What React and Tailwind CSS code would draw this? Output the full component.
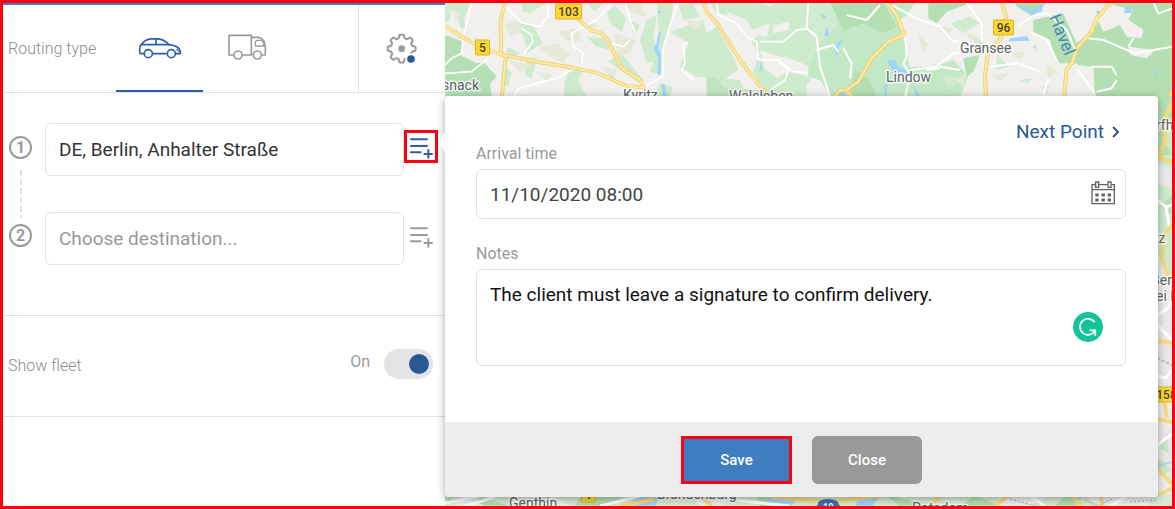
import React, { useState } from 'react';

function CarIcon() {
  return (
    <svg viewBox="414 110 132 66" className="w-11 h-[22px]" fill="none" stroke="#2f5ea8" strokeWidth="5" strokeLinejoin="round">
      <path d="M432 160H424Q419 160 419 154V146Q419 138 424 133Q434 117 454 115.500H474Q491 116 507 133Q531 136 538 146Q541 150 541 160H527M500 160H459" />
      <path d="M422 133H508M468 116V133" />
      <path d="M538 145Q529 145 530 149Q532 153 541 153" strokeWidth="3" />
      <circle cx="445" cy="160" r="12" />
      <circle cx="514" cy="160" r="12" />
    </svg>
  );
}

function TruckIcon() {
  return (
    <svg viewBox="21 103 120 81" className="w-10 h-[27px]" fill="none" stroke="#9b9b9b" strokeWidth="5" strokeLinejoin="round">
      <path d="M41 166H27V107H94V166H68M98 166H94M94 113H116Q133 116 136 139V166H126" />
      <path d="M135 139H106V129Q106 122 113 122H125Q131 129 133 139" strokeWidth="4" />
      <circle cx="54" cy="166" r="12" />
      <circle cx="112" cy="166" r="12" />
    </svg>
  );
}

const gearPath = Array.from({ length: 8 }, (_, i) => {
  const at = (deg, r) => {
    const a = ((i * 45 + deg) * Math.PI) / 180;
    return `${(Math.cos(a) * r).toFixed(1)} ${(Math.sin(a) * r).toFixed(1)}`;
  };
  return `${i ? 'L' : 'M'}${at(-12, 35)}Q${at(-11, 42)} ${at(-6, 42)}L${at(6, 42)}Q${at(11, 42)} ${at(12, 35)}Q${at(22, 29)} ${at(33, 35)}`;
}).join('') + 'Z';

function GearIcon() {
  return (
    <svg viewBox="-47 -47 96 96" className="w-8 h-8">
      <path d={gearPath} fill="none" stroke="#9b9b9b" strokeWidth="6" strokeLinejoin="round" />
      <circle r="10" fill="#9b9b9b" />
      <circle cx="28" cy="31" r="17" fill="#fff" />
      <circle cx="28" cy="31" r="11.500" fill="#2b5797" />
    </svg>
  );
}

function ListPlusIcon() {
  return (
    <svg viewBox="147 84 75 66" className="w-[25px] h-[22px] shrink-0" fill="none" stroke="currentColor" strokeWidth="6" strokeLinecap="round">
      <path d="M153 88H201M153 108H201M153 127H182M193 132H216M205 120V143" />
    </svg>
  );
}

function CalendarIcon() {
  return (
    <svg viewBox="332 272 72 72" className="w-6 h-6" fill="none" stroke="#636363" strokeWidth="4">
      <path d="M344 283H335V340H402V283H393M356 283H382M335 298H402" />
      <path d="M346 275H355V291H346ZM383 275H392V291H383Z" />
      <path d="M345 314H392M345 329H392" strokeWidth="9" strokeDasharray="10 8.500" />
    </svg>
  );
}

function GrammarIcon() {
  return (
    <svg viewBox="279 66 90 90" className="w-[30px] h-[30px]">
      <circle cx="324" cy="111" r="45" fill="#15c39a" />
      <path d="M344 97A24 24 0 1 0 345 122M329 121H346V138" fill="none" stroke="#fff" strokeWidth="5" />
    </svg>
  );
}

function RoadSign({ x, y, w, label }) {
  return (
    <g>
      <rect x={x} y={y} width={w} height="15" rx="1" fill="#fdd835" stroke="#d9b526" />
      <text x={x + w / 2} y={y + 12} textAnchor="middle" fontSize="12" fontWeight="500" fill="#4a4321">{label}</text>
    </g>
  );
}

const places = [
  { x: 442, y: 90, name: 'snack' },
  { x: 623, y: 100, name: 'Kyritz' },
  { x: 729, y: 101, name: 'Walsleben' },
  { x: 960, y: 53, name: 'Gransee' },
  { x: 886, y: 82, name: 'Lindow' },
  { x: 1156, y: 130, name: 'rfhof' },
  { x: 1154, y: 243, name: 'tz' },
  { x: 1151, y: 285, name: 'Bernau' },
  { x: 1156, y: 301, name: 'ei Berlin' },
  { x: 509, y: 508, name: 'Genthin' },
  { x: 657, y: 499, name: 'Brandenburg' },
  { x: 912, y: 513, name: 'Potsdam' },
];

// major roads, drawn once as a dark casing and once as a lighter fill
const roadsWest =
  'M15 78L90 125 180 163 300 187 400 203 475 220 560 258 615 262M195 8L182 60 183 160 197 170 186 288M405 50L455 92 480 98 500 115 545 205 600 240 612 265M790 8L800 35 835 75 880 150 925 215 985 288';
const roadsEast =
  'M262 8L290 45 312 104 265 125 215 175 175 245 140 270 118 272 105 288M135 270L155 288M605 8L618 50 600 120 565 150 555 230 558 290M930 8L890 55 875 95 830 145 818 185 800 210 792 290M1118 270L1095 330';

function MapView() {
  return (
    <svg
      viewBox="445 3 727 503"
      preserveAspectRatio="xMinYMin slice"
      className="absolute inset-0 w-full h-full"
      fontFamily="Roboto, sans-serif"
      aria-hidden="true"
    >
      <rect x="445" y="3" width="727" height="503" fill="#f2f0ed" />

      {/* north west */}
      <g transform="translate(440 0) scale(.33333)">
        <g fill="#ceebce">
          <path d="M30 8H90L70 60 80 90 60 80 50 40 25 25ZM245 8H320L270 40 250 35ZM225 65L280 80 310 130 260 160 255 120ZM200 140L240 160 200 180ZM185 195L215 215 205 260 185 250ZM260 175L290 170 275 235 255 225ZM395 195L430 210 415 240 440 290H370L375 240ZM440 8H490L465 35ZM500 40L525 15 560 55 545 95 515 75ZM440 110L490 115 510 150 470 140ZM505 185L545 160 610 240 600 250 550 215ZM100 110L125 125 120 150ZM15 8H35L30 60 15 70Z" />
          <path d="M620 60L650 45 640 110 660 180 620 190 600 120ZM650 8H700L690 80 670 130 665 225 630 215 660 140ZM690 95L790 60 800 100 830 80 880 170 895 210 850 240 770 230 720 200 745 130ZM810 8H1110V200L1040 170 960 175 900 50 830 40ZM715 15L760 10 780 50 730 60ZM570 60L600 75 585 110ZM660 250L700 260 690 290H640ZM950 180L1040 175 1110 210V290H990L940 220ZM800 230L900 240 920 290H800Z" />
        </g>
        <g fill="#f2f0ed">
          <path d="M860 35L920 60 950 110 930 130 870 70ZM910 100L990 70 980 110ZM1000 75L1050 65 1045 90 1000 100ZM960 150L1110 200V230L1040 215 1010 235 970 200ZM960 8H1010L990 20Z" />
        </g>
        <g fill="#b5e0b5">
          <path d="M15 105L70 125 60 165 110 190 130 185 170 230 150 250 155 288H15Z" />
          <path d="M800 232L830 235 850 260 990 275V290H800Z" fill="#bfe5bf" />
        </g>
        <g fill="#e5ead7">
          <path d="M195 75L230 60 245 100 210 110ZM300 140L350 130 390 160 370 190 320 165ZM355 95L415 85 425 125 380 120ZM290 215L340 225 320 240ZM525 100L590 120 570 160 530 170ZM445 60L480 80 450 90ZM205 180L280 195 240 220ZM555 15L600 8 620 50 580 40ZM730 60L790 65 770 90ZM485 200L530 210 520 245ZM40 25L60 40 45 70Z" />
        </g>
        <g fill="#9fd4fb">
          <path d="M656 95L663 97 656 145 663 165 662 225 652 222 655 175 640 145 650 130ZM652 38L660 28 662 40ZM665 250L675 255 679 288H668ZM957 210L965 185 967 215Z" />
        </g>
        <g fill="none" stroke="#fff" strokeWidth="5" strokeLinejoin="round">
          <path d="M95 8L85 50 70 110 65 160 35 175 15 195M15 220L95 215 140 178M195 18L245 68 300 80 325 50V8M245 85L275 105 278 125 250 165M515 8L470 60 430 80 395 100 400 140 430 160 425 190M225 288L235 265 290 250 350 235 405 205M555 8L570 60 590 105M715 8L695 60 668 150V230L620 255M515 130L550 140 570 120M745 125L730 135 735 190 725 210 760 240M830 8L835 45 890 70 920 110 950 125 955 180 1015 180 1060 215 1110 220M960 125H1030L1070 90 1110 85M1015 185L1045 210 1035 240 990 270" />
        </g>
        <path d={roadsWest} fill="none" stroke="#eccb6c" strokeWidth="11" strokeLinejoin="round" />
        <path d={roadsWest} fill="none" stroke="#fee89c" strokeWidth="7" strokeLinejoin="round" />
      </g>

      {/* north east */}
      <g transform="translate(800 0) scale(.33333)">
        <path d="M25 8H345L300 75 320 105 330 180 410 195 460 180 505 230 480 290H90L60 240 25 230Z" fill="#c3e8c5" />
        <path d="M25 8H120L110 80 60 130 25 200Z" fill="#cfebd0" />
        <path d="M20 250L60 240 90 290H20Z" fill="#f2f0ed" />
        <path d="M90 8H250L290 80 250 100 190 70 130 90ZM165 210L210 240 230 290H150ZM385 8H515L440 35 410 70 385 55ZM700 60L790 40 830 130 870 100 940 8H1118V290H890L860 220 830 190 770 190 750 120 700 95ZM490 175L540 165 520 215 500 230ZM645 8H740L700 50 650 20Z" fill="#b3dfb3" />
        <g fill="#f2f0ed">
          <path d="M890 50L940 15 1000 30 985 60 1030 90 1025 115 980 110 960 75 910 95ZM985 140L1065 150 1040 175 990 165ZM830 195L880 200 885 290H860L850 230ZM300 60L350 25 385 80 400 200 330 200 310 110Z" />
        </g>
        <g fill="#cfebd0">
          <path d="M450 70L510 50 540 70 490 100ZM520 110L560 130 570 160 530 170ZM425 225L480 230 450 270ZM590 165L630 200 590 210ZM660 240L700 235 680 250Z" />
        </g>
        <g fill="#e5ead7">
          <path d="M350 100L385 130 370 155ZM415 80L460 85 440 110ZM570 225L625 220 600 245ZM740 190L775 215 745 235ZM465 240L500 220 490 260ZM630 160L680 155 660 180ZM500 95L530 110 510 125ZM720 260L750 250 740 285Z" />
        </g>
        <g fill="#9fd4fb">
          <path d="M260 182L285 178 295 200 330 215 325 235 285 222ZM105 135L132 115 115 145 108 175ZM72 108L82 78 88 105ZM55 38L78 50 72 54ZM645 10L700 30 730 12 725 35 690 42ZM630 115L680 108 690 122 625 124ZM700 140L708 132 706 150ZM890 30L910 40 890 42ZM975 25L990 20 1000 38 972 40ZM1063 215L1074 222 1070 235ZM253 255L262 250 260 290 252 280ZM340 255L360 290H348ZM118 283L130 272 138 288H118Z" />
        </g>
        <g fill="none" stroke="#fff" strokeWidth="6" strokeLinejoin="round">
          <path d="M25 8L20 85 50 110 60 200 90 290M140 45L200 60 240 15M50 150L100 135 115 155M130 145L155 190 150 235M275 15L360 60 420 80 455 120 475 125M315 105L320 170 310 190 330 225 315 290M330 210L410 200 460 160 500 155M500 8L545 70 545 125M570 200L650 190 720 215M655 75L700 48 740 40 800 90 830 160M690 95L740 120 775 190M865 115L910 120 1005 160 1118 140M1000 115L985 140M830 205L885 280M875 200H935L950 225M950 240L935 265 890 275M1060 8L1075 40 1118 25M420 200L480 210M380 210L420 205M730 285L745 235" />
        </g>
        <path d={roadsEast} fill="none" stroke="#e9ca6e" strokeWidth="12" strokeLinejoin="round" />
        <path d={roadsEast} fill="none" stroke="#fee89c" strokeWidth="8" strokeLinejoin="round" />
      </g>

      {/* east edge */}
      <path d="M1157 96H1172V300H1157Z" fill="#cdebcd" />
      <path d="M1157 96H1172V118L1164 140 1172 155H1157ZM1160 206L1172 195V215Z" fill="#b5e0b5" />
      <path d="M1157 162L1172 170V188L1157 184ZM1157 255L1166 262 1172 300V506H1157Z" fill="#e9e9e8" />
      <path d="M1157 395H1172V430L1157 420ZM1157 470L1172 480V506H1157Z" fill="#edeef0" />
      <path d="M1160 448L1167 432 1169 454ZM1157 457L1172 470 1160 476Z" fill="#c5e7c8" />
      <path d="M1157 466L1172 462" stroke="#a9d5f5" strokeWidth="2" />
      <path d="M1157 200L1166 207 1172 205M1166 207L1170 230M1157 316L1168 308 1172 300M1157 325L1172 340M1157 376L1166 378 1172 370M1157 445L1172 434" fill="none" stroke="#fff" strokeWidth="3" />
      <path d="M1157 358L1172 365" stroke="#bbb" strokeWidth="2" strokeDasharray="3 2" />
      <path d="M1172 102L1164 120 1165 140 1159 158 1172 162M1172 225L1164 236 1162 258 1168 275 1172 278M1157 341L1172 343M1164 400L1167 418M1157 419L1172 422M1157 468L1172 484M1157 496L1172 488" fill="none" stroke="#f7da80" strokeWidth="4" />

      {/* south edge */}
      <path d="M445 495H1172V506H445Z" fill="#d9ebd3" />
      <path d="M445 495H455L445 506ZM478 496L510 506H480ZM580 496H625L610 506H575ZM755 495H805L790 506H760ZM885 495L935 506H900ZM975 495L1000 506H960ZM1065 495H1083L1075 506H1055Z" fill="#b5dfb5" />
      <path d="M460 495L485 506H455ZM550 495L572 506H545ZM690 495H740L720 506H700ZM1000 495H1050L1030 506H995ZM1085 495H1150V506H1100Z" fill="#edeef0" />
      <path d="M635 495L660 497 655 506H630ZM770 495L800 497 790 506H765ZM860 495L880 497 872 506H855Z" fill="#9fd4fb" />
      <path d="M445 503L480 496M465 506L495 497M600 506L640 496M735 500L790 506M1030 496L1045 506M1110 506L1125 497" fill="none" stroke="#fff" strokeWidth="3" />
      <path d="M620 506L655 499M700 496L712 506M770 497L830 502 880 496M930 506L940 496M995 506L1008 496M1072 496L1081 506M1100 496L1103 506" fill="none" stroke="#f7da80" strokeWidth="4" />
      <path d="M1010 499L1035 506M1085 500L1097 506 1112 499M1130 502L1157 500" fill="none" stroke="#aaa" strokeDasharray="2 2" />

      {places.map((p) => (
        <text
          key={p.name}
          x={p.x}
          y={p.y}
          fontSize="14"
          fill="#5f6368"
          stroke="#fff"
          strokeWidth="3"
          strokeOpacity="0.8"
          strokeLinejoin="round"
          paintOrder="stroke"
        >
          {p.name}
        </text>
      ))}
      <text transform="translate(1049 17) rotate(68)" fontSize="17" fill="#4a86b8">Havel</text>

      <RoadSign x={555.5} y={4} w={26} label="103" />
      <RoadSign x={475.5} y={40} w={14} label="5" />
      <RoadSign x={993.5} y={20} w={20} label="96" />
      <RoadSign x={1153.5} y={387} w={26} label="158" />
      <RoadSign x={581.5} y={487} w={14} label="1" />
      <path d="M817 506L819 501Q828 497 837 501L840 506Z" fill="#3b6db5" />
      <text x="823" y="510" fontSize="9" fontWeight="700" fill="#fff">10</text>
    </svg>
  );
}

function Sidebar() {
  const [type, setType] = useState('car');
  const [from, setFrom] = useState('DE, Berlin, Anhalter Straße');
  const [to, setTo] = useState('');
  const [fleet, setFleet] = useState(true);

  return (
    <aside className="w-[442px] shrink-0 bg-white border-t-2 border-[#3f7dc1]">
      <div className="flex h-[88px] border-b border-[#e0e0e0]">
        <span className="w-[113px] pl-[5px] leading-[88px] font-light text-[#8c8c8c]">Routing type</span>
        <button
          aria-label="Car"
          onClick={() => setType('car')}
          className={`w-[87px] flex items-center justify-center border-b-2 ${type === 'car' ? 'border-[#2f5ea8]' : 'border-transparent'}`}
        >
          <CarIcon />
        </button>
        <button
          aria-label="Truck"
          onClick={() => setType('truck')}
          className={`w-[87px] flex items-center justify-center border-b-2 ${type === 'truck' ? 'border-[#2f5ea8]' : 'border-transparent'}`}
        >
          <TruckIcon />
        </button>
        <button aria-label="Settings" className="ml-auto w-[87px] flex items-center justify-center border-l border-[#e0e0e0]">
          <GearIcon />
        </button>
      </div>

      <div className="flex pt-[30px] pb-[50px] pl-[6px] pr-[7px] border-b border-[#e0e0e0]">
        <div className="w-[23px] mr-[13px] pt-[13px] flex flex-col items-center text-base font-bold text-[#9b9b9b]">
          <span className="w-[23px] h-[23px] rounded-full border-2 border-[#9b9b9b] flex items-center justify-center">1</span>
          <span className="w-[2px] h-12 mt-[11px] mb-[6px] bg-[repeating-linear-gradient(#e0e0e0_0_6px,transparent_6px_9px)]" />
          <span className="w-[23px] h-[23px] rounded-full border-2 border-[#9b9b9b] flex items-center justify-center">2</span>
        </div>
        <div className="flex-1 space-y-9">
          <div className="flex items-start">
            <input
              aria-label="Start point"
              value={from}
              onChange={(e) => setFrom(e.target.value)}
              className="flex-1 min-w-0 h-[53px] px-[13px] border border-[#e0e0e0] rounded-md text-[19px] text-[#333]"
            />
            <button aria-label="Start point details" className="w-[34px] h-[33px] mt-[7px] pt-[5px] flex items-start justify-center border-3 border-[#ff0012] text-[#2f5ea8]">
              <ListPlusIcon />
            </button>
          </div>
          <div className="flex items-start">
            <input
              aria-label="Destination"
              value={to}
              onChange={(e) => setTo(e.target.value)}
              placeholder="Choose destination..."
              className="flex-1 min-w-0 h-[53px] px-[13px] border border-[#e0e0e0] rounded-md text-[19px] text-[#333] placeholder:text-[#999]"
            />
            <button aria-label="Destination details" className="w-[34px] h-[33px] mt-[7px] pt-[5px] flex items-start justify-center border-3 border-transparent text-[#9b9b9b]">
              <ListPlusIcon />
            </button>
          </div>
        </div>
      </div>

      <div className="flex items-center h-[101px] pb-1 pl-[5px] pr-3 border-b border-[#e0e0e0]">
        <label htmlFor="fleet" className="pt-1 font-light text-[#8c8c8c]">Show fleet</label>
        <span className="ml-auto mr-[14px] pb-1 text-[#999]">{fleet ? 'On' : 'Off'}</span>
        <input
          id="fleet"
          type="checkbox"
          role="switch"
          checked={fleet}
          onChange={(e) => setFleet(e.target.checked)}
          className="appearance-none w-[49px] h-[30px] py-[5px] px-1 rounded-full bg-[#e4e4e4] flex justify-start checked:justify-end before:block before:w-5 before:h-5 before:rounded-full before:bg-[#9b9b9b] checked:before:bg-[#2b5797]"
        />
      </div>
    </aside>
  );
}

function PointDetails() {
  const [time, setTime] = useState('11/10/2020 08:00');
  const [notes, setNotes] = useState('The client must leave a signature to confirm delivery.');

  return (
    <form className="relative bg-white rounded-[4px] shadow-[0_2px_8px_rgba(0,0,0,0.35)]" onSubmit={(e) => e.preventDefault()}>
      <span className="absolute -left-[6px] top-9 border-y-[10px] border-y-transparent border-r-[6px] border-r-white" />
      <div className="pt-6 pb-14 pl-[31px] pr-8">
        <div className="flex justify-end pr-[7px]">
          <a href="#next" className="flex items-center gap-2 text-[19px] leading-6 text-[#2b5797]">
            Next Point
            <svg viewBox="0 0 7 12" className="w-[7px] h-3" fill="none" stroke="currentColor" strokeWidth="2">
              <path d="M1 1L6 6 1 11" />
            </svg>
          </a>
        </div>

        <label htmlFor="arrival" className="block mb-[5px] leading-5 text-[#999]">Arrival time</label>
        <div className="relative">
          <input
            id="arrival"
            value={time}
            onChange={(e) => setTime(e.target.value)}
            className="block w-full h-[50px] px-[13px] border border-[#e0e0e0] rounded-md text-[19px] text-[#444]"
          />
          <button type="button" aria-label="Open calendar" className="absolute right-[11px] top-3">
            <CalendarIcon />
          </button>
        </div>

        <label htmlFor="notes" className="block mt-[25px] mb-[5px] leading-5 text-[#999]">Notes</label>
        <div className="relative">
          <textarea
            id="notes"
            value={notes}
            onChange={(e) => setNotes(e.target.value)}
            className="block w-full h-[97px] px-[13px] py-[13px] border border-[#e0e0e0] rounded-md resize-none text-[19px] leading-6 text-[#111]"
          />
          <span className="absolute right-[23px] bottom-6">
            <GrammarIcon />
          </span>
        </div>
      </div>

      <div className="flex justify-center gap-5 pt-[14px] pb-[13px] bg-[#ededed] rounded-b-[4px]">
        <button type="submit" className="w-[111px] h-12 border-3 border-[#ff0012] bg-[#3f7dc1] text-white text-[15px] font-medium">Save</button>
        <button type="button" className="w-[110px] h-12 rounded-md bg-[#999] text-white text-[15px] font-medium">Close</button>
      </div>
    </form>
  );
}

export default function App() {
  return (
    <div className="min-h-screen flex border-3 border-[#ff0012] bg-white font-[Roboto,sans-serif]">
      <Sidebar />
      <main className="relative flex-1 min-w-0 pt-[93px] pr-[14px] pb-[9px]">
        <MapView />
        <PointDetails />
      </main>
    </div>
  );
}
